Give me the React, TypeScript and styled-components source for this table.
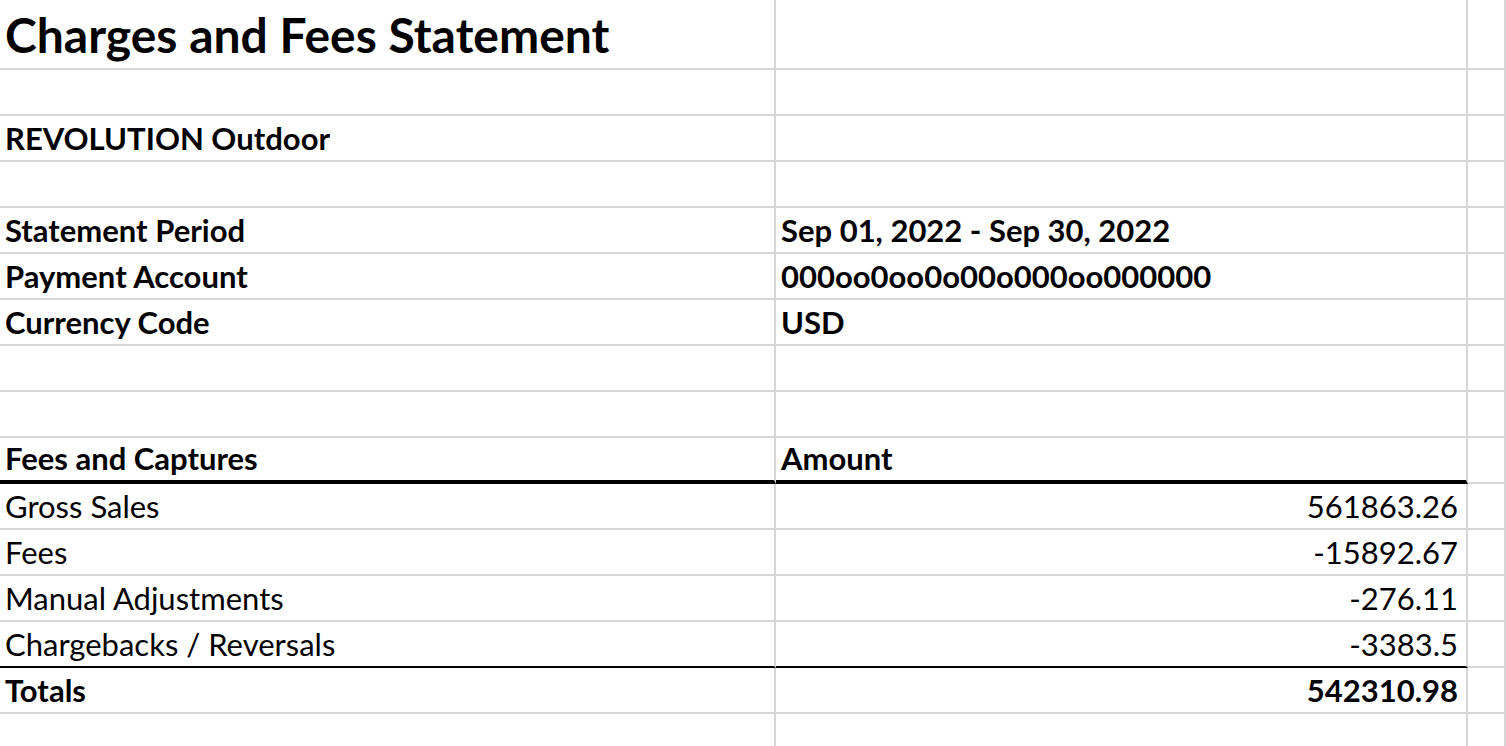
import React from 'react';
import styled, { createGlobalStyle } from 'styled-components';

const GlobalStyle = createGlobalStyle`
    html, body {
        margin: 0;
        padding: 0;
        background: #ffffff;
    }
    body {
        font-family: Lato, 'Liberation Sans', sans-serif;
        color: #000000;
        overflow: hidden;
    }
`;

const GRID = '#d6d6d6';

const Sheet = styled.div`
    width: 1506px;
    height: 746px;
    overflow: hidden;
`;

const Row = styled.div<{ $height: number }>`
    display: grid;
    grid-template-columns: 776px 692px 1fr;
    height: ${(p) => p.$height}px;
`;

const Cell = styled.div<{ $rule?: 'thick' | 'thin'; $align?: 'right' }>`
    display: flex;
    align-items: flex-end;
    justify-content: ${(p) => (p.$align === 'right' ? 'flex-end' : 'flex-start')};
    border-right: 2px solid ${GRID};
    border-bottom: ${(p) =>
        p.$rule === 'thick'
            ? '4px solid #000'
            : p.$rule === 'thin'
            ? '2px solid #000'
            : `2px solid ${GRID}`};
    padding: 0 8px 6px 5px;
    font-size: 31px;
    line-height: 1;
    white-space: nowrap;
    overflow: hidden;
`;

const Title = styled.span`
    font-size: 48px;
    font-weight: 700;
    padding-bottom: 3px;
`;

const Text = styled.span<{ $bold?: boolean }>`
    font-weight: ${(p) => (p.$bold ? 700 : 400)};
`;

type Line = {
    label?: string;
    value?: string;
    bold?: boolean;
    rule?: 'thick' | 'thin';
    right?: boolean;
};

const lines: Line[] = [
    {},
    { label: 'REVOLUTION Outdoor', bold: true },
    {},
    { label: 'Statement Period', value: 'Sep 01, 2022 - Sep 30, 2022', bold: true },
    { label: 'Payment Account', value: '000oo0oo0o00o000oo000000', bold: true },
    { label: 'Currency Code', value: 'USD', bold: true },
    {},
    {},
    { label: 'Fees and Captures', value: 'Amount', bold: true, rule: 'thick' },
    { label: 'Gross Sales', value: '561863.26', right: true },
    { label: 'Fees', value: '-15892.67', right: true },
    { label: 'Manual Adjustments', value: '-276.11', right: true },
    { label: 'Chargebacks / Reversals', value: '-3383.5', right: true, rule: 'thin' },
    { label: 'Totals', value: '542310.98', bold: true, right: true },
    {},
];

function App() {
    return (
        <>
            <GlobalStyle />
            <Sheet>
                <Row $height={70}>
                    <Cell>
                        <Title>Charges and Fees Statement</Title>
                    </Cell>
                    <Cell />
                    <Cell />
                </Row>
                {lines.map((line, i) => (
                    <Row $height={46} key={i}>
                        <Cell $rule={line.rule}>
                            {line.label && <Text $bold={line.bold}>{line.label}</Text>}
                        </Cell>
                        <Cell $rule={line.rule} $align={line.right ? 'right' : undefined}>
                            {line.value && <Text $bold={line.bold}>{line.value}</Text>}
                        </Cell>
                        <Cell />
                    </Row>
                ))}
            </Sheet>
        </>
    );
}

export default App;
